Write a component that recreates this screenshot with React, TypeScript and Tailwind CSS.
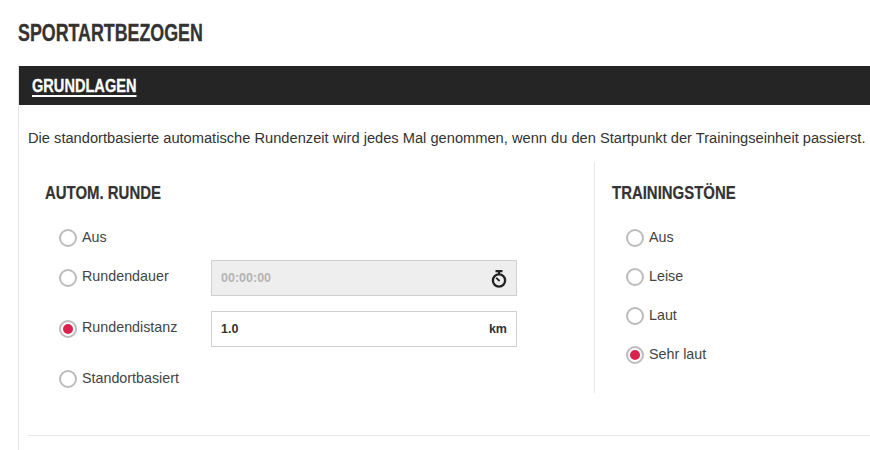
const sans = "font-['Liberation_Sans',Arial,sans-serif]";

const Radio = ({ checked = false }: { checked?: boolean }) => (
  <span className="flex h-[18px] w-[18px] shrink-0 items-center justify-center rounded-full border-2 border-[#bdbbbb] bg-white">
    {checked && <span className="h-[10px] w-[10px] rounded-full bg-[#dc2350]" />}
  </span>
);

const Option = ({ label, checked, raised }: { label: string; checked?: boolean; raised?: boolean }) => (
  <label className="flex w-[143px] shrink-0 items-center gap-[5px] text-[14.3px] leading-[18px] text-[#444]">
    <Radio checked={checked} />
    <span className={raised ? 'relative -top-[2px] whitespace-nowrap' : 'relative -top-[1px] whitespace-nowrap'}>
      {label}
    </span>
  </label>
);

const Heading = ({ children }: { children: string }) => (
  <h3 className="h-[20px] w-[200px] origin-left scale-x-[0.83] whitespace-nowrap text-[18px] font-bold leading-[20px] text-[#333] [-webkit-text-stroke:0.2px_#333]">
    {children}
  </h3>
);

const StopwatchIcon = () => (
  <svg className="mt-[1px]" width="16" height="18" viewBox="0 0 16 18" fill="none" stroke="#222" strokeWidth="2.3">
    <path d="M4.5 1.1h7M8 1v3" />
    <circle cx="8" cy="10.5" r="6.1" />
    <path d="M5.2 7.8L8.6 11" strokeWidth="1.8" />
  </svg>
);

export default function App() {
  return (
    <div className={`h-[450px] w-[870px] overflow-hidden bg-white ${sans}`}>
      <div className="pl-[18px] pt-[20px]">
        <h2 className="h-[26px] w-[240px] origin-left scale-x-[0.775] whitespace-nowrap text-[23px] font-bold leading-[26px] text-[#333] [-webkit-text-stroke:0.3px_#333]">
          SPORTARTBEZOGEN
        </h2>

        <section className="mt-[20px] h-[400px] w-[900px] border-l border-[#e4e4e4]">
          <div className="flex h-[39px] items-center bg-[#252525] pl-[13px]">
            <span className="w-[130px] origin-left scale-x-[0.81] whitespace-nowrap text-[18px] font-bold leading-[20px] text-white underline decoration-2 underline-offset-[3px] [-webkit-text-stroke:0.3px_#fff]">
              GRUNDLAGEN
            </span>
          </div>

          <div className="pl-[9px]">
            <p className="mt-[24px] whitespace-nowrap text-[14.67px] leading-[18px] text-[#333]">
              Die standortbasierte automatische Rundenzeit wird jedes Mal genommen, wenn du den Startpunkt der Trainingseinheit passierst.
            </p>

            <div className="mt-[15px] flex h-[231px]">
              <div className="w-[567px] border-r border-[#e8e8e8] pl-[17px] pt-[21px]">
                <Heading>AUTOM. RUNDE</Heading>
                <div className="mt-[26px] flex flex-col pl-[14px]">
                  <div className="flex h-[18px] items-center">
                    <Option label="Aus" />
                  </div>
                  <div className="mt-[13px] flex h-[36px] items-center">
                    <Option label="Rundendauer" raised />
                    <div className="ml-[9px] flex h-[36px] w-[306px] items-center justify-between border border-[#cfcfcf] bg-[#eeeeee] pl-[9px] pr-[9px] text-[12.5px] font-bold text-[#b4b4b4]">
                      <span>00:00:00</span>
                      <StopwatchIcon />
                    </div>
                  </div>
                  <div className="mt-[15px] flex h-[36px] items-center">
                    <Option label="Rundendistanz" checked raised />
                    <div className="ml-[9px] flex h-[36px] w-[306px] items-center justify-between border border-[#cfcfcf] bg-white pl-[9px] pr-[9px] text-[12.5px] font-bold text-[#333]">
                      <span>1.0</span>
                      <span>km</span>
                    </div>
                  </div>
                  <div className="mt-[14px] flex h-[36px] items-center">
                    <Option label="Standortbasiert" />
                  </div>
                </div>
              </div>

              <div className="pl-[17px] pt-[21px]">
                <Heading>TRAININGSTÖNE</Heading>
                <div className="mt-[26px] flex flex-col gap-[21px] pl-[14px]">
                  <Option label="Aus" />
                  <Option label="Leise" />
                  <Option label="Laut" />
                  <Option label="Sehr laut" checked />
                </div>
              </div>
            </div>

            <div className="mt-[42px] border-t border-[#e8e8e8]" />
          </div>
        </section>
      </div>
    </div>
  );
}
